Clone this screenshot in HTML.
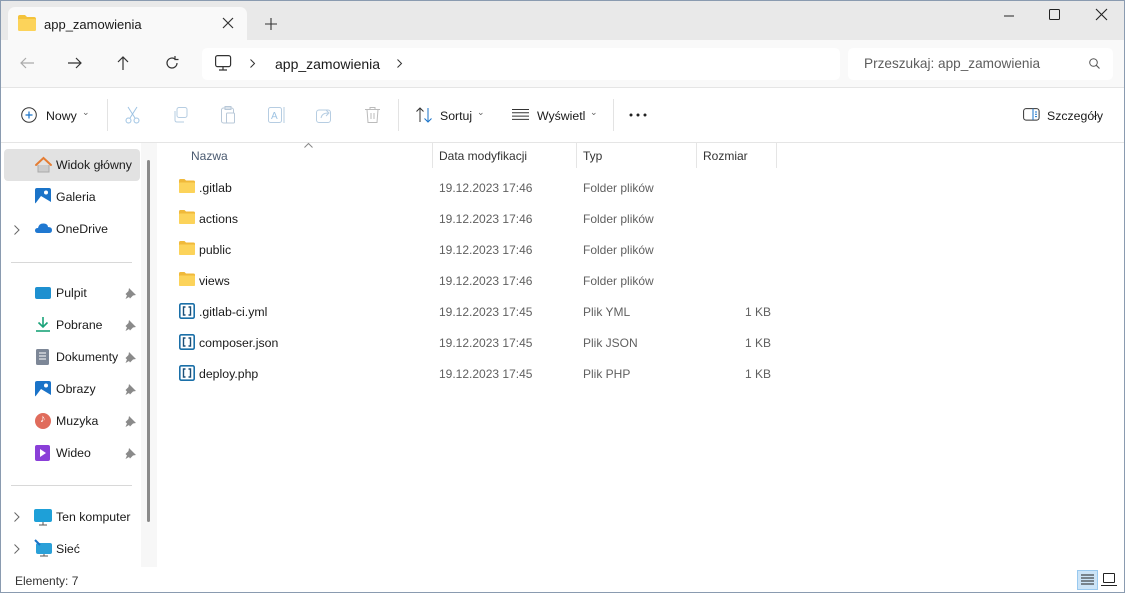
<!DOCTYPE html>
<html><head><meta charset="utf-8"><style>
*{margin:0;padding:0;box-sizing:border-box}
body{width:1125px;height:593px;overflow:hidden;background:#fff;font-family:"Liberation Sans",sans-serif;font-size:12px;color:#1a1a1a;position:relative}
.a{position:absolute}
.t{position:absolute;white-space:nowrap}
.g{color:#606060}
svg{position:absolute;overflow:visible}
.s{font-size:12.3px}
</style></head><body>
<div class="a" style="left:0;top:0;width:1125px;height:593px;border:1px solid #8a9bb0;z-index:9;pointer-events:none"></div>
<div class="a" style="left:0;top:0;width:1125px;height:40px;background:#e9e9e9"></div>
<div class="a" style="left:8px;top:7px;width:239px;height:34px;background:#f9f9f9;border-radius:7px 7px 0 0"></div>
<svg style="left:18px;top:15px" width="18" height="16"><path d="M0 2 Q0 0 2 0 H7 L9 2 H16 Q18 2 18 4 V14 Q18 16 16 16 H2 Q0 16 0 14Z" fill="#f4c33b"/><rect x="0" y="4" width="18" height="12" rx="1.5" fill="#fcd35a"/></svg>
<div class="t" style="left:44px;top:17px;font-size:13px">app_zamowienia</div>
<svg style="left:223px;top:18px" width="10" height="10"><path d="M0 0L10 10M10 0L0 10" stroke="#333" stroke-width="1.2"/></svg>
<svg style="left:265px;top:18px" width="12" height="12"><path d="M6 0V12M0 6H12" stroke="#333" stroke-width="1.1"/></svg>
<svg style="left:1004px;top:15px" width="10" height="2"><path d="M0 1H10" stroke="#222" stroke-width="1"/></svg>
<div class="a" style="left:1049px;top:9px;width:11px;height:11px;border:1.3px solid #222;border-radius:1.5px"></div>
<svg style="left:1096px;top:9px" width="11" height="11"><path d="M0 0L11 11M11 0L0 11" stroke="#222" stroke-width="1.1"/></svg>
<div class="a" style="left:0;top:40px;width:1125px;height:48px;background:#f9f9f9;border-bottom:1px solid #e5e5e5"></div>
<svg style="left:20px;top:57px" width="14" height="12"><path d="M14 6H1M6 1L1 6L6 11" stroke="#aaa" stroke-width="1.2" fill="none"/></svg>
<svg style="left:68px;top:57px" width="14" height="12"><path d="M0 6H13M8 1L13 6L8 11" stroke="#333" stroke-width="1.2" fill="none"/></svg>
<svg style="left:117px;top:56px" width="12" height="14"><path d="M6 14V1M1 6L6 1L11 6" stroke="#333" stroke-width="1.2" fill="none"/></svg>
<svg style="left:165px;top:56px" width="14" height="14"><path d="M12 7A5 5 0 1 1 10 3M10 0V3.5H13.5" stroke="#333" stroke-width="1.2" fill="none"/></svg>
<div class="a" style="left:202px;top:48px;width:638px;height:32px;background:#fff;border-radius:5px"></div>
<svg style="left:215px;top:55px" width="17" height="16"><rect x="0.6" y="0.6" width="15" height="11" rx="2" stroke="#333" stroke-width="1.2" fill="none"/><path d="M8 12V15M4 15H12" stroke="#333" stroke-width="1.2"/></svg>
<svg style="left:250px;top:59px" width="5" height="9"><path d="M0.5 0.5L4.5 4.5L0.5 8.5" stroke="#333" fill="none"/></svg>
<div class="t" style="left:275px;top:56px;font-size:14px">app_zamowienia</div>
<svg style="left:397px;top:59px" width="5" height="9"><path d="M0.5 0.5L4.5 4.5L0.5 8.5" stroke="#333" fill="none"/></svg>
<div class="a" style="left:848px;top:48px;width:265px;height:32px;background:#fff;border-radius:5px"></div>
<div class="t" style="left:864px;top:56px;font-size:13.6px;color:#5d5d5d">Przeszukaj: app_zamowienia</div>
<svg style="left:1089px;top:58px" width="11" height="11"><circle cx="4.5" cy="4.5" r="3.8" stroke="#555" fill="none"/><path d="M7.2 7.2L10.5 10.5" stroke="#555" stroke-width="1.1"/></svg>
<div class="a" style="left:0;top:142px;width:1125px;height:1px;background:#e5e5e5"></div>
<svg style="left:21px;top:107px" width="16" height="16"><circle cx="8" cy="8" r="7.3" stroke="#333" fill="none"/><path d="M8 4.5V11.5M4.5 8H11.5" stroke="#1a73c8" stroke-width="1.2"/></svg>
<div class="t s" style="left:46px;top:109px">Nowy</div>
<div class="t g" style="left:82px;top:107px;font-size:9px">⌄</div>
<div class="a" style="left:107px;top:99px;width:1px;height:32px;background:#e3e3e3"></div>
<svg style="left:125px;top:107px" width="15" height="17"><path d="M3 0L10 11M12 0L5 11" stroke="#9ec3e3" fill="none"/><circle cx="3.5" cy="13.5" r="2.5" stroke="#9ec3e3" fill="none"/><circle cx="11.5" cy="13.5" r="2.5" stroke="#9ec3e3" fill="none"/></svg>
<svg style="left:173px;top:107px" width="15" height="16"><rect x="4" y="0.5" width="10" height="10" rx="2" stroke="#b6cde2" fill="none"/><path d="M2 4V13Q2 15 4 15H11" stroke="#b6cde2" fill="none"/></svg>
<svg style="left:221px;top:106px" width="15" height="18"><rect x="0.5" y="2" width="12" height="15" rx="2" stroke="#b8c8d8" fill="none"/><rect x="4" y="0.5" width="6" height="3" stroke="#b8c8d8" fill="none"/><rect x="5.5" y="7" width="8" height="10" rx="1" stroke="#b8c8d8" fill="#fff"/></svg>
<svg style="left:268px;top:107px" width="18" height="16"><rect x="0.5" y="0.5" width="13" height="15" rx="2" stroke="#b6cde2" fill="none"/><text x="3" y="12" font-size="10" fill="#9ec3e3" font-family="Liberation Sans">A</text><path d="M16 0V16" stroke="#b6cde2"/></svg>
<svg style="left:316px;top:107px" width="17" height="16"><rect x="0.5" y="3" width="14" height="12.5" rx="2.5" stroke="#b6cde2" fill="none"/><path d="M5 11Q6 6 12 6M10 3L13 6L10 9" stroke="#b6cde2" fill="none"/></svg>
<svg style="left:365px;top:107px" width="15" height="16"><path d="M0 2.5H15M5 2.5V0.5H10V2.5M2 2.5L3 15.5H12L13 2.5M6 6V12M9 6V12" stroke="#bbb" fill="none"/></svg>
<div class="a" style="left:398px;top:99px;width:1px;height:32px;background:#e3e3e3"></div>
<svg style="left:416px;top:107px" width="17" height="16"><path d="M4 15V1M0.5 4.5L4 1L7.5 4.5" stroke="#333" fill="none"/><path d="M12 1V15M8.5 11.5L12 15L15.5 11.5" stroke="#1a73c8" fill="none"/></svg>
<div class="t s" style="left:440px;top:109px">Sortuj</div>
<div class="t g" style="left:477px;top:107px;font-size:9px">⌄</div>
<svg style="left:512px;top:109px" width="17" height="11"><path d="M0 0.5H17M0 3.8H17M0 7.1H17M0 10.4H17" stroke="#333"/></svg>
<div class="t s" style="left:537px;top:109px">Wyświetl</div>
<div class="t g" style="left:590px;top:107px;font-size:9px">⌄</div>
<div class="a" style="left:613px;top:99px;width:1px;height:32px;background:#e3e3e3"></div>
<svg style="left:629px;top:113px" width="18" height="4"><circle cx="2" cy="2" r="1.5" fill="#222"/><circle cx="9" cy="2" r="1.5" fill="#222"/><circle cx="16" cy="2" r="1.5" fill="#222"/></svg>
<svg style="left:1023px;top:108px" width="17" height="13"><rect x="0.6" y="0.6" width="15.5" height="11.5" rx="2.5" stroke="#333" fill="none"/><path d="M10 0.6V12" stroke="#1a73c8"/><path d="M12 4H14M12 6.3H14M12 8.6H14" stroke="#1a73c8"/></svg>
<div class="t s" style="left:1047px;top:109px">Szczegóły</div>
<div class="a" style="left:141px;top:143px;width:16px;height:424px;background:#f7f7f7"></div>
<div class="a" style="left:147px;top:160px;width:3px;height:362px;background:#8a8a8a;border-radius:2px"></div>
<div class="a" style="left:4px;top:149px;width:136px;height:32px;background:#e2e2e2;border-radius:4px"></div>
<svg style="left:35px;top:157px" width="17" height="16"><path d="M1 8L8.5 1L16 8" stroke="#e57d33" stroke-width="2" fill="none" stroke-linecap="round"/><path d="M3 8V15H14V8" fill="#ccc" stroke="#aaa"/></svg>
<div class="t s" style="left:56px;top:158px">Widok główny</div>
<svg style="left:35px;top:188px" width="16" height="16"><rect x="0" y="0" width="16" height="16" rx="2" fill="#1a73c8"/><path d="M0 16L6 8L16 14V16Z" fill="#fff"/><circle cx="11" cy="4.5" r="2" fill="#fff"/></svg>
<div class="t s" style="left:56px;top:190px">Galeria</div>
<svg style="left:14px;top:225px" width="6" height="10"><path d="M0.5 0.5L5 5L0.5 9.5" stroke="#666" fill="none"/></svg>
<svg style="left:35px;top:223px" width="17" height="10"><path d="M3 10Q0 10 0 7.5Q0 5 3 5Q4 0 9 0.5Q13 1 13 4Q17 4 17 7Q17 10 14 10Z" fill="#1f78d1"/></svg>
<div class="t s" style="left:56px;top:222px">OneDrive</div>
<div class="a" style="left:11px;top:262px;width:121px;height:1px;background:#d8d8d8"></div>
<div class="a" style="left:35px;top:287px;width:16px;height:12px;background:#1e90d0;border-radius:2px"></div>
<div class="t s" style="left:56px;top:286px">Pulpit</div>
<svg style="left:36px;top:317px" width="14" height="15"><path d="M7 0V10M2.5 5.5L7 10L11.5 5.5" stroke="#1ba37a" stroke-width="1.6" fill="none"/><path d="M0 14H14" stroke="#1ba37a" stroke-width="1.6"/></svg>
<div class="t s" style="left:56px;top:318px">Pobrane</div>
<svg style="left:36px;top:349px" width="13" height="16"><rect x="0" y="0" width="13" height="16" rx="1.5" fill="#7d8797"/><path d="M3 4H10M3 7H10M3 10H10" stroke="#fff"/></svg>
<div class="t s" style="left:56px;top:350px">Dokumenty</div>
<svg style="left:35px;top:381px" width="16" height="16"><rect x="0" y="0" width="16" height="16" rx="2" fill="#1a73c8"/><path d="M0 16L6 8L16 14V16Z" fill="#fff"/><circle cx="11" cy="4.5" r="2" fill="#fff"/></svg>
<div class="t s" style="left:56px;top:382px">Obrazy</div>
<div class="a" style="left:35px;top:413px;width:16px;height:16px;background:#e06c5c;border-radius:50%"></div>
<div class="t" style="left:40px;top:413px;font-size:11px;color:#fff">♪</div>
<div class="t s" style="left:56px;top:414px">Muzyka</div>
<div class="a" style="left:35px;top:445px;width:15px;height:16px;background:#8a3fd8;border-radius:2px"></div>
<svg style="left:39px;top:449px" width="8" height="8"><path d="M1 0L7 4L1 8Z" fill="#fff"/></svg>
<div class="t s" style="left:56px;top:446px">Wideo</div>
<svg style="left:125px;top:288px" width="11" height="11"><path d="M4 0L11 7L8 7.5L5 10.5L4 9L0.5 11L2 7.5L0.5 6L3.5 3Z" fill="#8a8a8a"/></svg>
<svg style="left:125px;top:320px" width="11" height="11"><path d="M4 0L11 7L8 7.5L5 10.5L4 9L0.5 11L2 7.5L0.5 6L3.5 3Z" fill="#8a8a8a"/></svg>
<svg style="left:125px;top:352px" width="11" height="11"><path d="M4 0L11 7L8 7.5L5 10.5L4 9L0.5 11L2 7.5L0.5 6L3.5 3Z" fill="#8a8a8a"/></svg>
<svg style="left:125px;top:384px" width="11" height="11"><path d="M4 0L11 7L8 7.5L5 10.5L4 9L0.5 11L2 7.5L0.5 6L3.5 3Z" fill="#8a8a8a"/></svg>
<svg style="left:125px;top:416px" width="11" height="11"><path d="M4 0L11 7L8 7.5L5 10.5L4 9L0.5 11L2 7.5L0.5 6L3.5 3Z" fill="#8a8a8a"/></svg>
<svg style="left:125px;top:448px" width="11" height="11"><path d="M4 0L11 7L8 7.5L5 10.5L4 9L0.5 11L2 7.5L0.5 6L3.5 3Z" fill="#8a8a8a"/></svg>
<div class="a" style="left:11px;top:485px;width:121px;height:1px;background:#d8d8d8"></div>
<svg style="left:14px;top:512px" width="6" height="10"><path d="M0.5 0.5L5 5L0.5 9.5" stroke="#666" fill="none"/></svg>
<svg style="left:34px;top:509px" width="18" height="17"><rect x="0" y="0" width="18" height="13" rx="2" fill="#1ea0d8"/><path d="M9 13V16M5 16H13" stroke="#555"/></svg>
<div class="t s" style="left:56px;top:510px">Ten komputer</div>
<svg style="left:14px;top:544px" width="6" height="10"><path d="M0.5 0.5L5 5L0.5 9.5" stroke="#666" fill="none"/></svg>
<svg style="left:34px;top:540px" width="18" height="17"><rect x="2" y="3" width="16" height="11" rx="2" fill="#2aa0d8"/><path d="M1 0L6 5" stroke="#1a73c8" stroke-width="2"/><path d="M10 14V16M6 16H14" stroke="#555"/></svg>
<div class="t s" style="left:56px;top:542px">Sieć</div>
<div class="t" style="left:15px;top:574px;font-size:12px;color:#333">Elementy: 7</div>
<div class="a" style="left:1077px;top:570px;width:21px;height:20px;background:#cce4f7;border:1px solid #99c9ef"></div>
<svg style="left:1081px;top:574px" width="13" height="11"><path d="M0 1H13M0 4H13M0 7H13M0 10H13" stroke="#222"/></svg>
<div class="a" style="left:1103px;top:573px;width:12px;height:10px;border:1.2px solid #222;border-radius:1px"></div>
<div class="a" style="left:1101px;top:585px;width:16px;height:1px;background:#222"></div>
<div class="t g" style="left:191px;top:149px;color:#4a5a70">Nazwa</div>
<svg style="left:304px;top:143px" width="9" height="5"><path d="M0.5 4.5L4.5 0.5L8.5 4.5" stroke="#888" fill="none"/></svg>
<div class="a" style="left:432px;top:143px;width:1px;height:25px;background:#e5e5e5"></div>
<div class="t" style="left:439px;top:149px;color:#333">Data modyfikacji</div>
<div class="a" style="left:576px;top:143px;width:1px;height:25px;background:#e5e5e5"></div>
<div class="t" style="left:583px;top:149px;color:#333">Typ</div>
<div class="a" style="left:696px;top:143px;width:1px;height:25px;background:#e5e5e5"></div>
<div class="t" style="left:703px;top:149px;color:#333">Rozmiar</div>
<div class="a" style="left:776px;top:143px;width:1px;height:25px;background:#e5e5e5"></div>
<svg style="left:179px;top:179px" width="16" height="14"><path d="M0 1.5Q0 0 1.5 0H5.5L7 1.5H14.5Q16 1.5 16 3V12.5Q16 14 14.5 14H1.5Q0 14 0 12.5Z" fill="#f0b93a"/><rect x="0" y="3.5" width="16" height="10.5" rx="1" fill="#fcd35a"/></svg>
<div class="t s" style="left:199px;top:181px">.gitlab</div>
<svg style="left:179px;top:210px" width="16" height="14"><path d="M0 1.5Q0 0 1.5 0H5.5L7 1.5H14.5Q16 1.5 16 3V12.5Q16 14 14.5 14H1.5Q0 14 0 12.5Z" fill="#f0b93a"/><rect x="0" y="3.5" width="16" height="10.5" rx="1" fill="#fcd35a"/></svg>
<div class="t s" style="left:199px;top:212px">actions</div>
<svg style="left:179px;top:241px" width="16" height="14"><path d="M0 1.5Q0 0 1.5 0H5.5L7 1.5H14.5Q16 1.5 16 3V12.5Q16 14 14.5 14H1.5Q0 14 0 12.5Z" fill="#f0b93a"/><rect x="0" y="3.5" width="16" height="10.5" rx="1" fill="#fcd35a"/></svg>
<div class="t s" style="left:199px;top:243px">public</div>
<svg style="left:179px;top:272px" width="16" height="14"><path d="M0 1.5Q0 0 1.5 0H5.5L7 1.5H14.5Q16 1.5 16 3V12.5Q16 14 14.5 14H1.5Q0 14 0 12.5Z" fill="#f0b93a"/><rect x="0" y="3.5" width="16" height="10.5" rx="1" fill="#fcd35a"/></svg>
<div class="t s" style="left:199px;top:274px">views</div>
<svg style="left:179px;top:303px" width="16" height="16"><rect x="0.8" y="0.8" width="14.4" height="14.4" rx="1.5" stroke="#1a6fa8" stroke-width="1.6" fill="#fff"/><path d="M6.5 4H4.5V12H6.5M9.5 4H11.5V12H9.5" stroke="#1a4f78" stroke-width="1.4" fill="none"/></svg>
<div class="t s" style="left:199px;top:305px">.gitlab-ci.yml</div>
<svg style="left:179px;top:334px" width="16" height="16"><rect x="0.8" y="0.8" width="14.4" height="14.4" rx="1.5" stroke="#1a6fa8" stroke-width="1.6" fill="#fff"/><path d="M6.5 4H4.5V12H6.5M9.5 4H11.5V12H9.5" stroke="#1a4f78" stroke-width="1.4" fill="none"/></svg>
<div class="t s" style="left:199px;top:336px">composer.json</div>
<svg style="left:179px;top:365px" width="16" height="16"><rect x="0.8" y="0.8" width="14.4" height="14.4" rx="1.5" stroke="#1a6fa8" stroke-width="1.6" fill="#fff"/><path d="M6.5 4H4.5V12H6.5M9.5 4H11.5V12H9.5" stroke="#1a4f78" stroke-width="1.4" fill="none"/></svg>
<div class="t s" style="left:199px;top:367px">deploy.php</div>
<div class="t g" style="left:439px;top:181px">19.12.2023 17:46</div><div class="t g" style="left:583px;top:181px">Folder plików</div>
<div class="t g" style="left:439px;top:212px">19.12.2023 17:46</div><div class="t g" style="left:583px;top:212px">Folder plików</div>
<div class="t g" style="left:439px;top:243px">19.12.2023 17:46</div><div class="t g" style="left:583px;top:243px">Folder plików</div>
<div class="t g" style="left:439px;top:274px">19.12.2023 17:46</div><div class="t g" style="left:583px;top:274px">Folder plików</div>
<div class="t g" style="left:439px;top:305px">19.12.2023 17:45</div><div class="t g" style="left:583px;top:305px">Plik YML</div><div class="t g" style="left:745px;top:305px">1 KB</div>
<div class="t g" style="left:439px;top:336px">19.12.2023 17:45</div><div class="t g" style="left:583px;top:336px">Plik JSON</div><div class="t g" style="left:745px;top:336px">1 KB</div>
<div class="t g" style="left:439px;top:367px">19.12.2023 17:45</div><div class="t g" style="left:583px;top:367px">Plik PHP</div><div class="t g" style="left:745px;top:367px">1 KB</div>
</body></html>
